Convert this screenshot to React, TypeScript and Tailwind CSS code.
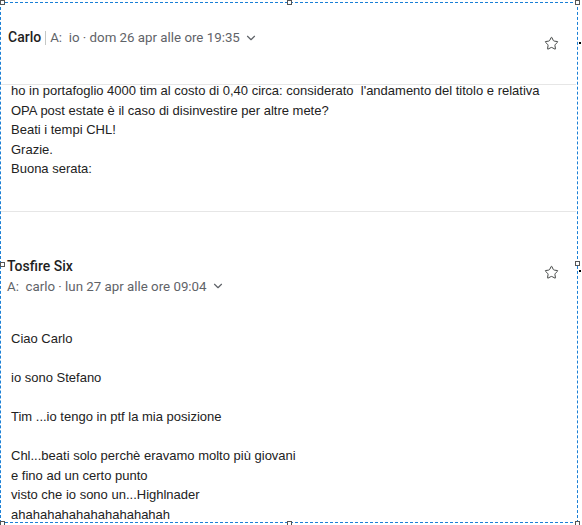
import { ChevronDown, Star } from "lucide-react";

const bodyFont = { fontFamily: '"Liberation Sans", Arial, sans-serif' };

type HeaderProps = {
  name: string;
  to: string;
  date: string;
  inline?: boolean;
};

const Meta = ({ to, date }: { to: string; date: string }) => (
  <span className="flex items-center text-[13.3px] text-[#5f6368]">
    <span>A:&nbsp;&nbsp;{to} · {date}</span>
    <ChevronDown className="ml-[4px] h-[14px] w-[14px]" strokeWidth={2} />
  </span>
);

const MessageHeader = ({ name, to, date, inline }: HeaderProps) => (
  <div className="flex items-start justify-between pr-[17px] font-['Roboto',sans-serif]">
    {inline ? (
      <div className="flex items-center pl-[8px]">
        <span className="text-[14px] font-medium text-[#1f1f1f]">{name}</span>
        <span className="mx-[4px] h-[14px] w-px bg-[#c4c7c5]" />
        <Meta to={to} date={date} />
      </div>
    ) : (
      <div className="flex flex-col gap-[1px] pl-[7px]">
        <span className="text-[14px] font-medium leading-[19px] text-[#1f1f1f]">{name}</span>
        <Meta to={to} date={date} />
      </div>
    )}
    <Star
      className={`${inline ? "mt-[9px]" : "mt-[8px]"} h-[15px] w-[15px] text-[#444746]`}
      strokeWidth={1.6}
    />
  </div>
);

const Body = ({ lines }: { lines: string[] }) => (
  <div style={bodyFont} className="pl-[11px] text-[13px] leading-[19.5px] text-[#222222]">
    {lines.map((line, i) => (
      <div key={i} className="h-[19.5px] whitespace-pre">
        {line}
      </div>
    ))}
  </div>
);

const Handle = ({ className }: { className: string }) => (
  <span className={`absolute h-[5px] w-[5px] border border-[#555] bg-white ${className}`} />
);

export default function App() {
  return (
    <div className="relative h-[525px] w-[582px] overflow-hidden bg-white">
      <div className="w-[576px]">
        <div className="pt-[27px]">
          <MessageHeader inline name="Carlo" to="io" date="dom 26 apr alle ore 19:35" />
        </div>
        <div className="mt-[33px] border-b border-[#e6e6e6]" />
        <div className="-mt-[4px]">
          <Body
            lines={[
              "ho in portafoglio 4000 tim al costo di 0,40 circa: considerato  l'andamento del titolo e relativa",
              "OPA post estate è il caso di disinvestire per altre mete?",
              "Beati i tempi CHL!",
              "Grazie.",
              "Buona serata:",
            ]}
          />
        </div>
        <div className="mt-[32px] border-b border-[#e6e6e6]" />
        <div className="pt-[45px]">
          <MessageHeader name="Tosfire Six" to="carlo" date="lun 27 apr alle ore 09:04" />
        </div>
        <div className="pt-[33px]">
          <Body
            lines={[
              "Ciao Carlo",
              "",
              "io sono Stefano",
              "",
              "Tim ...io tengo in ptf la mia posizione",
              "",
              "Chl...beati solo perchè eravamo molto più giovani",
              "e fino ad un certo punto",
              "visto che io sono un...Highlnader",
              "ahahahahahahahahahahah",
            ]}
          />
        </div>
      </div>

      {/* selection frame */}
      <div className="pointer-events-none absolute left-0 top-[2px] h-[521px] w-[578px] border border-dashed border-[#1a7fd6]" />
      <Handle className="left-0 top-0" />
      <Handle className="left-[287px] top-0" />
      <Handle className="left-[575px] top-0" />
      <Handle className="left-0 top-[262px]" />
      <Handle className="left-[575px] top-[261px]" />
      <Handle className="left-0 top-[521px]" />
      <Handle className="left-[287px] top-[521px]" />
      <Handle className="left-[575px] top-[521px]" />
      <span className="absolute left-[579px] top-[42px] h-[2px] w-[2px] bg-black" />
      <span className="absolute left-[579px] top-[270px] h-[2px] w-[2px] bg-black" />
    </div>
  );
}
